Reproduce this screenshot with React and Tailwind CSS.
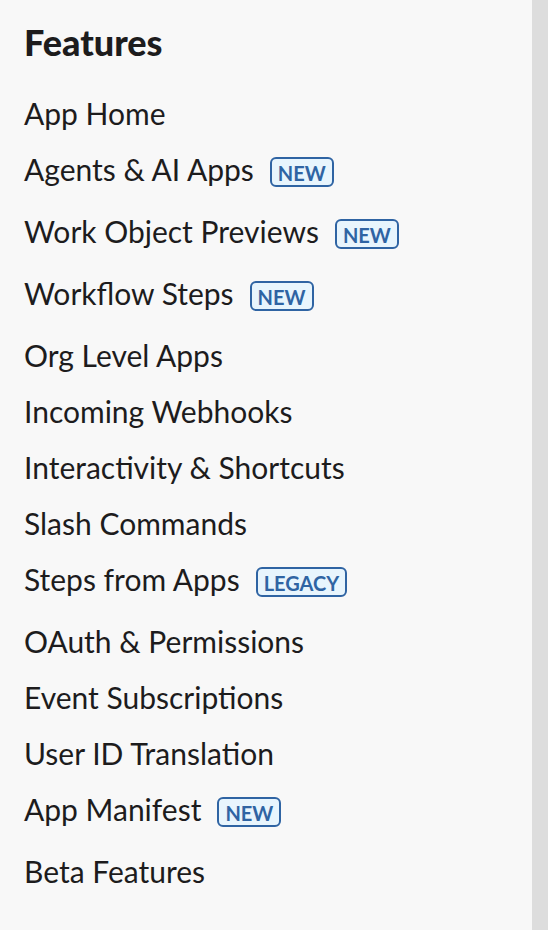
import React from 'react';

const items = [
  { label: 'App Home' },
  { label: 'Agents & AI Apps', badge: 'NEW' },
  { label: 'Work Object Previews', badge: 'NEW' },
  { label: 'Workflow Steps', badge: 'NEW' },
  { label: 'Org Level Apps' },
  { label: 'Incoming Webhooks' },
  { label: 'Interactivity & Shortcuts' },
  { label: 'Slash Commands' },
  { label: 'Steps from Apps', badge: 'LEGACY' },
  { label: 'OAuth & Permissions' },
  { label: 'Event Subscriptions' },
  { label: 'User ID Translation' },
  { label: 'App Manifest', badge: 'NEW' },
  { label: 'Beta Features' },
];

function Badge({ children }) {
  return (
    <span className="inline-block rounded-[6px] border-2 border-[#2f64a3] bg-[#e8f5fd] px-[6px] pt-[4px] pb-[2px] text-[20px] leading-[20px] font-bold text-[#2f64a3]">
      {children}
    </span>
  );
}

export default function App() {
  return (
    <div className="flex min-h-[930px] w-full bg-[#dddddd] font-['Lato',sans-serif] text-[#1d1c1d]">
      <nav className="w-[532px] bg-[#f8f8f8] pl-[24px] pt-[20px]">
        <h2 className="text-[36px] leading-[44px] font-black">Features</h2>

        {/* Sidebar links */}
        <ul className="mt-[21px]">
          {items.map((item) => (
            <li
              key={item.label}
              className={`flex items-baseline gap-[16px] pt-[14px] text-[30px] leading-[28px] ${
                item.badge ? 'pb-[16px]' : 'pb-[14px]'
              }`}
            >
              <span>{item.label}</span>
              {item.badge && <Badge>{item.badge}</Badge>}
            </li>
          ))}
        </ul>
      </nav>
    </div>
  );
}
